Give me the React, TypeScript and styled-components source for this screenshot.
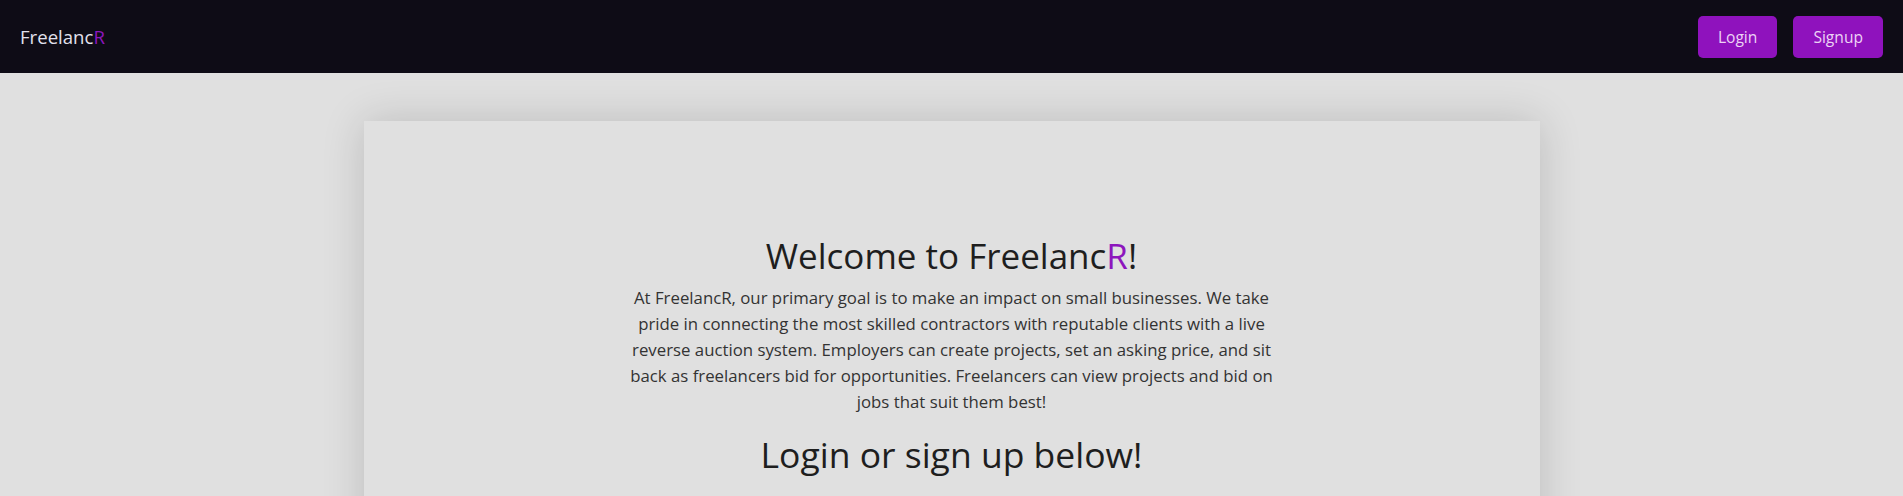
import React from "react";
import styled, { createGlobalStyle } from "styled-components";

const GlobalStyle = createGlobalStyle`
  html, body {
    margin: 0;
    padding: 0;
    background: #e0e0e0;
    font-family: "Open Sans", "Noto Sans", sans-serif;
    overflow: hidden;
  }
`;

const Page = styled.div`
  min-height: 100vh;
  background: #e0e0e0;
`;

const NavBar = styled.header`
  height: 73px;
  background: #0e0c16;
  display: flex;
  align-items: center;
  justify-content: space-between;
  padding: 0 20px;
  box-sizing: border-box;
`;

const Brand = styled.div`
  font-size: 18.6px;
  color: #e2e2ee;
  letter-spacing: 0;
`;

const Accent = styled.span`
  color: #8d16bd;
`;

const NavActions = styled.nav`
  display: flex;
  gap: 16px;
`;

const NavButton = styled.button`
  height: 42px;
  padding: 0 20px;
  border: none;
  border-radius: 5px;
  background: #8f12bd;
  color: #ecd3f5;
  font-family: inherit;
  font-size: 15.6px;
  cursor: pointer;
`;

const Card = styled.main`
  width: 1176px;
  min-height: 520px;
  margin: 48px auto 0;
  background: #e0e0e0;
  box-shadow: 0 0 40px rgba(0, 0, 0, 0.16);
  padding-top: 114px;
  box-sizing: border-box;
  display: flex;
  flex-direction: column;
  align-items: center;
  text-align: center;
`;

const Title = styled.h1`
  margin: 0;
  font-size: 35px;
  line-height: 42px;
  font-weight: 500;
  color: #1e1e1e;
`;

const Intro = styled.p`
  margin: 8px 0 0;
  max-width: 650px;
  font-size: 16.8px;
  line-height: 26px;
  color: #333;
`;

const Subtitle = styled.h2`
  margin: 18px 0 0;
  font-size: 35.5px;
  line-height: 42px;
  font-weight: 500;
  color: #1e1e1e;
`;

export default function App() {
  return (
    <Page>
      <GlobalStyle />
      <NavBar>
        <Brand>
          Freelanc<Accent>R</Accent>
        </Brand>
        <NavActions>
          <NavButton>Login</NavButton>
          <NavButton>Signup</NavButton>
        </NavActions>
      </NavBar>
      <Card>
        <Title>
          Welcome to Freelanc<Accent>R</Accent>!
        </Title>
        <Intro>
          At FreelancR, our primary goal is to make an impact on small businesses. We take
          pride in connecting the most skilled contractors with reputable clients with a live
          reverse auction system. Employers can create projects, set an asking price, and sit
          back as freelancers bid for opportunities. Freelancers can view projects and bid on
          jobs that suit them best!
        </Intro>
        <Subtitle>Login or sign up below!</Subtitle>
      </Card>
    </Page>
  );
}
